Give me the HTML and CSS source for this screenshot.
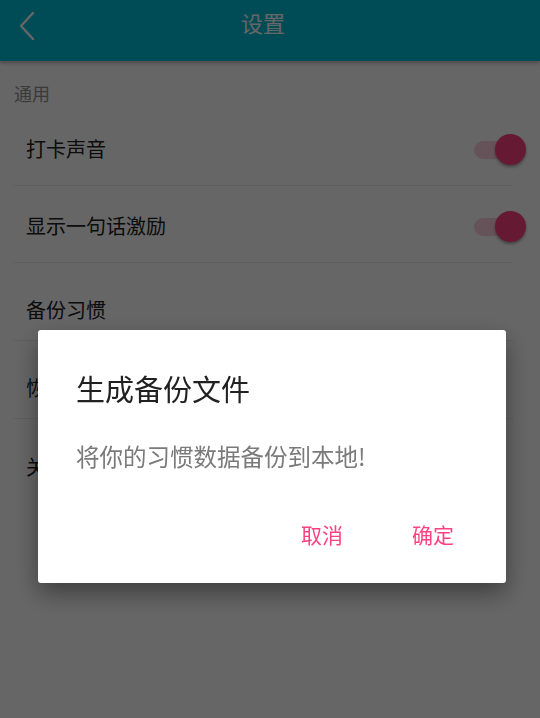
FILE: index.html
```html
<!DOCTYPE html>
<html lang="zh-CN">
<head>
  <meta charset="UTF-8" />
  <title>设置</title>
  <link rel="stylesheet" href="styles.css">
</head>
<body>
  <div class="topbar">
    <svg class="back" width="20" height="30" viewBox="0 0 20 30">
      <path d="M15 2 L3 15 L15 28" fill="none" stroke="#fff" stroke-width="2.4" stroke-linecap="round" stroke-linejoin="round"/>
    </svg>
    <div class="title">设置</div>
  </div>

  <div class="section">通用</div>
  <div class="list">
    <div class="row">
      <span>打卡声音</span>
      <div class="switch on"><div class="track"></div><div class="thumb"></div></div>
    </div>
    <div class="row">
      <span>显示一句话激励</span>
      <div class="switch on"><div class="track"></div><div class="thumb"></div></div>
    </div>
    <div class="row plain"><span>备份习惯</span></div>
    <div class="row plain"><span>恢复习惯</span></div>
    <div class="row plain last"><span>关于</span></div>
  </div>

  <!-- dialog on top of dimmed page -->
  <div class="overlay">
    <div class="dialog">
      <h2>生成备份文件</h2>
      <p>将你的习惯数据备份到本地!</p>
      <div class="actions">
        <button>取消</button>
        <button>确定</button>
      </div>
    </div>
  </div>
</body>
</html>
```

FILE: styles.css
```css
body {
  margin: 0;
  font-family: "Noto Sans CJK SC", "Noto Sans", sans-serif;
  background: #fff;
  width: 540px;
  height: 718px;
  overflow: hidden;
}

.topbar {
  height: 61px;
  background: #00bdd6;
  display: flex;
  align-items: center;
  box-shadow: 0 2px 4px rgba(0, 0, 0, 0.3);
  position: relative;
}

.back {
  margin-left: 18px;
  margin-top: -10px;
}

.title {
  flex: 1;
  text-align: center;
  color: #fff;
  font-size: 22px;
  margin-left: -52px;
  margin-top: -17px;
}

.section {
  color: #929292;
  font-size: 18px;
  line-height: 1;
  padding: 23px 0 0 14px;
  height: 25px;
}

.list {
  padding: 0 27px 0 14px;
}

.row {
  display: flex;
  align-items: center;
  justify-content: space-between;
  height: 77px;
  box-sizing: border-box;
  border-bottom: 1px solid #ececec;
  padding: 2px 0 0 12px;
  font-size: 20px;
  color: #212121;
}

.row.plain {
  height: 78px;
  padding-top: 16px;
}

.row.last {
  border-bottom: none;
}

.switch {
  position: relative;
  width: 52px;
  height: 32px;
  margin-right: -13px;
  margin-top: 4px;
}

.track {
  position: absolute;
  left: 0;
  top: 7px;
  width: 38px;
  height: 18px;
  border-radius: 9px;
  background: #ffd0de;
}

.thumb {
  position: absolute;
  left: 21px;
  top: 0;
  width: 31px;
  height: 31px;
  border-radius: 50%;
  background: #ff4081;
  box-shadow: 0 2px 3px rgba(0, 0, 0, 0.35);
}

.overlay {
  position: fixed;
  inset: 0;
  background: rgba(0, 0, 0, 0.6);
}

.dialog {
  position: absolute;
  left: 38px;
  top: 330px;
  width: 468px;
  height: 253px;
  background: #fff;
  border-radius: 3px;
  box-shadow: 0 10px 24px rgba(0, 0, 0, 0.4);
  box-sizing: border-box;
  padding: 44px 38px 0 38px;
}

.dialog h2 {
  margin: 0;
  font-weight: normal;
  font-size: 29px;
  color: #212121;
  line-height: 1;
  height: 42px;
}

.dialog p {
  margin: 0;
  font-size: 23.5px;
  color: #7a7a7a;
  line-height: 1.2;
  padding-top: 26px;
}

.actions {
  display: flex;
  justify-content: flex-end;
  gap: 41px;
  margin-top: 45px;
}

.actions button {
  border: none;
  background: none;
  color: #ff4081;
  font-family: inherit;
  font-size: 21px;
  padding: 4px 14px;
  cursor: pointer;
}
```
